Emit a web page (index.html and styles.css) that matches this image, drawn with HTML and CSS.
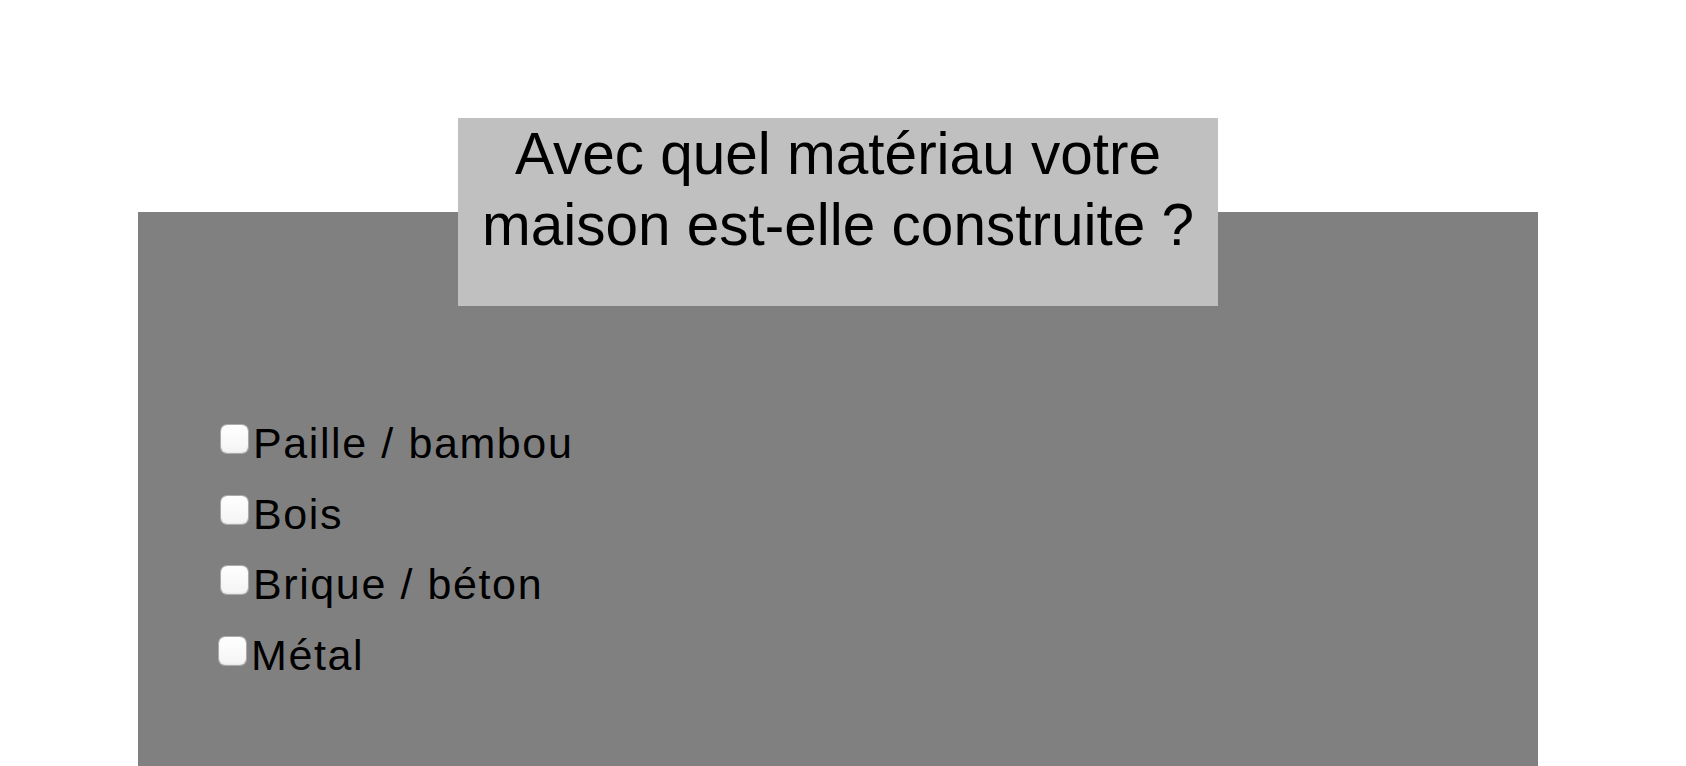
FILE: index.html
```html
<!DOCTYPE html>
<html lang="fr">
<head>
<meta charset="utf-8">
<title>Questionnaire</title>
<link rel="stylesheet" href="styles.css">
</head>
<body>
<div class="page">
  <h1 class="question">Avec quel matériau votre<br>maison est-elle construite ?</h1>
  <div class="panel">
    <ul class="options">
      <li class="option"><input type="checkbox" class="box"><span class="label">Paille / bambou</span></li>
      <li class="option"><input type="checkbox" class="box"><span class="label">Bois</span></li>
      <li class="option"><input type="checkbox" class="box"><span class="label">Brique / béton</span></li>
      <li class="option option-last"><input type="checkbox" class="box"><span class="label">Métal</span></li>
    </ul>
  </div>
</div>
</body>
</html>
```
FILE: styles.css
```css
html, body {
  margin: 0;
  padding: 0;
  background: #ffffff;
  overflow: hidden;
}

body {
  font-family: "Liberation Sans", Arial, Helvetica, sans-serif;
  color: #000000;
}

.page {
  width: 1400px;
  margin-left: 138px;
  padding-top: 118px;
  display: flex;
  flex-direction: column;
  align-items: center;
}

.question {
  position: relative;
  z-index: 1;
  box-sizing: border-box;
  width: 760px;
  height: 188px;
  margin: 0;
  padding: 0;
  background: #c0c0c0;
  font-size: 58.5px;
  font-weight: normal;
  line-height: 71px;
  text-align: center;
}

.panel {
  box-sizing: border-box;
  align-self: stretch;
  height: 700px;
  margin-top: -94px;
  padding: 196px 0 0 83px;
  background: #808080;
}

.options {
  list-style: none;
  margin: 0;
  padding: 0;
  display: flex;
  flex-direction: column;
}

.option {
  display: flex;
  align-items: flex-start;
  height: 70.5px;
  font-size: 43px;
  line-height: 70px;
  letter-spacing: 1.6px;
}

.option-last {
  margin-left: -2px;
}

.box {
  appearance: none;
  -webkit-appearance: none;
  box-sizing: border-box;
  width: 27px;
  height: 28px;
  margin: 17px 5px 0 0;
  border-radius: 6px;
  background: linear-gradient(#ffffff, #f4f4f4);
  box-shadow: 0 0 0 1px rgba(200, 200, 200, 0.6), inset 0 -1px 2px rgba(0, 0, 0, 0.06);
}

.label {
  white-space: nowrap;
}
```
